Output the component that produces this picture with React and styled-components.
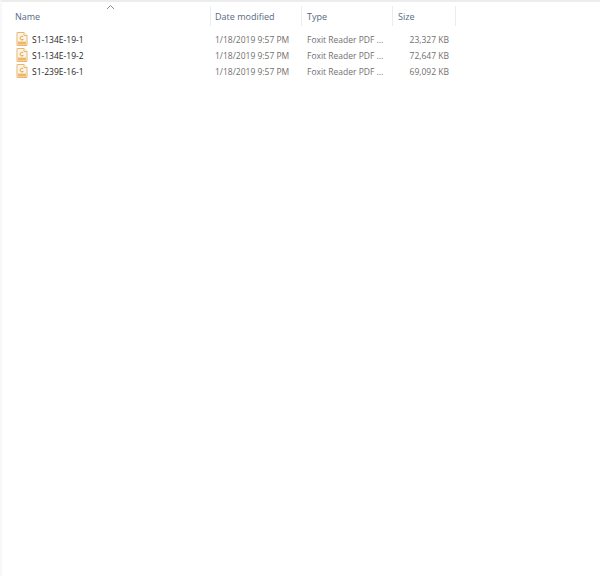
import React from "react";
import styled, { createGlobalStyle } from "styled-components";

const Global = createGlobalStyle`
  html, body { margin: 0; padding: 0; background: #fff; }
  body { font-family: "Open Sans", "Noto Sans", sans-serif; }
`;

const Page = styled.div`
  position: relative;
  width: 600px;
  height: 576px;
  box-sizing: border-box;
  background: #fff;
  border-top: 2px solid #ececec;
  border-left: 2px solid #f8f8f8;
  overflow: hidden;
`;

const COLS = "209px 91px 91px 63px";

const Header = styled.div`
  display: grid;
  grid-template-columns: ${COLS};
  height: 20px;
  margin-top: 4px;
`;

const HeadCell = styled.div`
  position: relative;
  display: flex;
  align-items: center;
  box-sizing: border-box;
  padding-left: ${(p) => p.$pad}px;
  font-size: 9px;
  color: #566980;
  border-right: 1px solid #e9ecf0;
`;

const SortArrow = styled.svg`
  position: absolute;
  left: 104px;
  top: -2px;
  width: 9px;
  height: 6px;
`;

const Rows = styled.div`
  display: flex;
  flex-direction: column;
  margin-top: 5px;
`;

const Row = styled.div`
  display: grid;
  grid-template-columns: ${COLS};
  height: 16px;
  align-items: center;
  font-size: 8.5px;
  color: #707070;
`;

const NameCell = styled.div`
  display: flex;
  align-items: center;
  gap: 4px;
  padding-left: 14px;
  color: #262626;
`;

const TextCell = styled.div`
  padding-left: ${(p) => p.$pad}px;
  white-space: nowrap;
`;

const SizeCell = styled.div`
  text-align: right;
  padding-right: 7px;
  white-space: nowrap;
`;

const FileIcon = () => (
  <svg width="12" height="14" viewBox="0 0 12 14">
    <path d="M1 .5h7l3 3v10H1z" fill="#fdf6e8" stroke="#e9b66e" />
    <path d="M8 .5v3h3" fill="#fff" stroke="#e9b66e" />
    <path d="M7.2 4.6a1.9 1.9 0 1 0 0 3h-1.4" fill="none" stroke="#dc9240" strokeWidth=".9" />
    <rect x="2" y="9.6" width="8" height="3" fill="#eeb765" />
  </svg>
);

const files = [
  { name: "S1-134E-19-1", size: "23,327 KB" },
  { name: "S1-134E-19-2", size: "72,647 KB" },
  { name: "S1-239E-16-1", size: "69,092 KB" },
];

export default function App() {
  return (
    <Page>
      <Global />
      <Header>
        <HeadCell $pad={13}>
          Name
          <SortArrow viewBox="0 0 9 6">
            <path d="M1 5l3.5-3.5L8 5" fill="none" stroke="#8a8a8a" strokeWidth="1" />
          </SortArrow>
        </HeadCell>
        <HeadCell $pad={4}>Date modified</HeadCell>
        <HeadCell $pad={5}>Type</HeadCell>
        <HeadCell $pad={5}>Size</HeadCell>
      </Header>
      <Rows>
        {files.map((f) => (
          <Row key={f.name}>
            <NameCell>
              <FileIcon />
              {f.name}
            </NameCell>
            <TextCell $pad={4}>1/18/2019 9:57 PM</TextCell>
            <TextCell $pad={5}>Foxit Reader PDF ...</TextCell>
            <SizeCell>{f.size}</SizeCell>
          </Row>
        ))}
      </Rows>
    </Page>
  );
}
